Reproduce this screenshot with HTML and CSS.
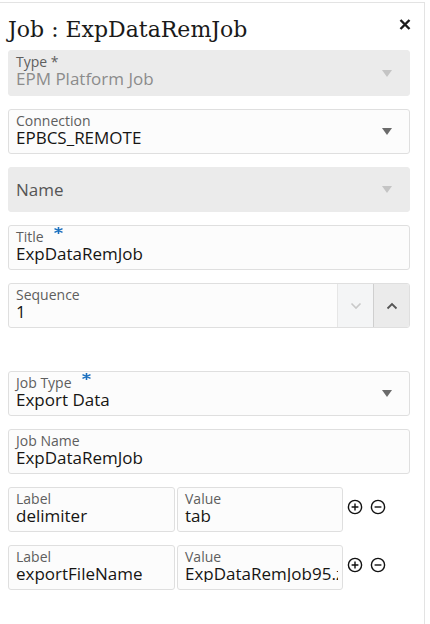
FILE: index.html
```html
<!DOCTYPE html>
<html>
<head>
<meta charset="utf-8">
<link rel="stylesheet" href="styles.css">
</head>
<body>
<div class="panel">
  <div class="header">
    <h1 class="title">Job : ExpDataRemJob</h1>
    <svg class="close" width="12" height="11" viewBox="0 0 12 11"><path d="M1.5 1 L10.5 10 M10.5 1 L1.5 10" stroke="#1a1a1a" stroke-width="2.4" stroke-linecap="butt"/></svg>
  </div>
  <div class="form">
    <div class="field disabled first">
      <div class="fbody">
        <div class="label">Type *</div>
        <div class="value">EPM Platform Job</div>
      </div>
      <span class="caret light"></span>
    </div>
    <div class="field">
      <div class="fbody">
        <div class="label">Connection</div>
        <div class="value">EPBCS_REMOTE</div>
      </div>
      <span class="caret"></span>
    </div>
    <div class="field disabled">
      <div class="fbody">
        <div class="value placeholder">Name</div>
      </div>
      <span class="caret light"></span>
    </div>
    <div class="field">
      <div class="fbody">
        <div class="label">Title<svg class="req" width="9" height="7" viewBox="0 0 9 7"><path d="M4.5 0 V7 M0.5 1.6 L8.5 5.4 M8.5 1.6 L0.5 5.4" stroke="#1a6fbf" stroke-width="1.6"/></svg></div>
        <div class="value">ExpDataRemJob</div>
      </div>
    </div>
    <div class="field spin">
      <div class="fbody">
        <div class="label">Sequence</div>
        <div class="value">1</div>
      </div>
      <div class="sbtn down">
        <svg width="12" height="8" viewBox="0 0 12 8"><path d="M1.5 1.5 L6 6 L10.5 1.5" fill="none" stroke="#c9c9c9" stroke-width="1.6"/></svg>
      </div>
      <div class="sbtn up">
        <svg width="12" height="8" viewBox="0 0 12 8"><path d="M1.5 6.5 L6 2 L10.5 6.5" fill="none" stroke="#555" stroke-width="1.8"/></svg>
      </div>
    </div>
    <div class="field gap-top">
      <div class="fbody">
        <div class="label">Job Type<svg class="req" width="9" height="7" viewBox="0 0 9 7"><path d="M4.5 0 V7 M0.5 1.6 L8.5 5.4 M8.5 1.6 L0.5 5.4" stroke="#1a6fbf" stroke-width="1.6"/></svg></div>
        <div class="value">Export Data</div>
      </div>
      <span class="caret"></span>
    </div>
    <div class="field">
      <div class="fbody">
        <div class="label">Job Name</div>
        <div class="value">ExpDataRemJob</div>
      </div>
    </div>
    <div class="prow">
      <div class="field half">
        <div class="fbody">
          <div class="label">Label</div>
          <div class="value">delimiter</div>
        </div>
      </div>
      <div class="field half">
        <div class="fbody">
          <div class="label">Value</div>
          <div class="value">tab</div>
        </div>
      </div>
      <div class="icons">
        <svg width="16" height="16" viewBox="0 0 16 16"><circle cx="8" cy="8" r="6.6" fill="none" stroke="#111" stroke-width="1.4"/><path d="M4.6 8 H11.4 M8 4.6 V11.4" stroke="#111" stroke-width="1.4"/></svg>
        <svg width="16" height="16" viewBox="0 0 16 16"><circle cx="8" cy="8" r="6.6" fill="none" stroke="#111" stroke-width="1.4"/><path d="M4.6 8 H11.4" stroke="#111" stroke-width="1.4"/></svg>
      </div>
    </div>
    <div class="prow">
      <div class="field half">
        <div class="fbody">
          <div class="label">Label</div>
          <div class="value">exportFileName</div>
        </div>
      </div>
      <div class="field half">
        <div class="fbody clipbody">
          <div class="label">Value</div>
          <div class="value clip">ExpDataRemJob95.zip</div>
        </div>
      </div>
      <div class="icons">
        <svg width="16" height="16" viewBox="0 0 16 16"><circle cx="8" cy="8" r="6.6" fill="none" stroke="#111" stroke-width="1.4"/><path d="M4.6 8 H11.4 M8 4.6 V11.4" stroke="#111" stroke-width="1.4"/></svg>
        <svg width="16" height="16" viewBox="0 0 16 16"><circle cx="8" cy="8" r="6.6" fill="none" stroke="#111" stroke-width="1.4"/><path d="M4.6 8 H11.4" stroke="#111" stroke-width="1.4"/></svg>
      </div>
    </div>
  </div>
</div>
</body>
</html>
```

FILE: styles.css
```css
html, body {
  margin: 0;
  padding: 0;
  background: #fff;
}
body {
  font-family: "Open Sans", "Noto Sans", sans-serif;
  color: #161513;
}
.panel {
  margin-top: 2px;
  width: 425px;
  height: 622px;
  border-top: 1px solid #e3e3e3;
  border-right: 1px solid #e3e3e3;
  box-sizing: border-box;
}
.header {
  display: flex;
  justify-content: space-between;
  align-items: flex-start;
  padding: 0 13px 0 8px;
  height: 47px;
}
.title {
  margin: 0;
  padding-top: 13px;
  font-family: "DejaVu Serif", "Liberation Serif", serif;
  font-weight: normal;
  font-size: 22px;
  line-height: 28px;
  color: #1a1a1a;
}
.close {
  margin-top: 16px;
}
.form {
  display: flex;
  flex-direction: column;
  gap: 13px;
  padding: 0 14px 0 8px;
}
.field {
  display: flex;
  align-items: center;
  height: 45px;
  box-sizing: border-box;
  border: 1px solid #dfdfdf;
  border-radius: 3px;
  background: #fcfcfc;
  overflow: hidden;
}
.field.first {
  height: 46px;
}
.field.disabled {
  background: #ebebeb;
  border-color: #ebebeb;
}
.fbody {
  flex: 1;
  min-width: 0;
  padding: 3px 7px 0 7px;
  align-self: flex-start;
}
.fbody.clipbody {
  padding-right: 4px;
}
.disabled .fbody {
  align-self: center;
  padding-top: 0;
}
.first .fbody {
  align-self: flex-start;
  padding-top: 3px;
}
.label {
  font-size: 14px;
  line-height: 15px;
  color: #5e5e5e;
  white-space: nowrap;
  display: flex;
  align-items: flex-start;
}
.value {
  font-size: 17px;
  line-height: 17px;
  padding-top: 1px;
  color: #161513;
  white-space: nowrap;
}
.disabled .value {
  color: #8c8c8c;
}
.value.placeholder {
  color: #555;
  line-height: 22px;
  padding-top: 0;
}
.value.clip {
  overflow: hidden;
}
.req {
  margin-left: 10px;
  margin-top: -2px;
}
.caret {
  width: 0;
  height: 0;
  border-left: 5.5px solid transparent;
  border-right: 5.5px solid transparent;
  border-top: 7px solid #6b6b6b;
  margin-right: 17px;
}
.caret.light {
  border-top-color: #c4c4c4;
}
.spin .sbtn {
  width: 35px;
  height: 100%;
  display: flex;
  align-items: center;
  justify-content: center;
}
.sbtn.down {
  background: #f4f5f6;
  border-left: 1px solid #e6e6e6;
}
.sbtn.up {
  background: #ebebeb;
  border-left: 1px solid #cfcfcf;
}
.gap-top {
  margin-top: 30px;
}
.prow {
  display: flex;
  align-items: center;
  gap: 2px;
}
.field.half {
  width: 167px;
  flex: none;
}
.field.half + .field.half {
  width: 166px;
}
.icons {
  display: flex;
  gap: 7px;
  margin-left: 2px;
  margin-top: -5px;
}
```
